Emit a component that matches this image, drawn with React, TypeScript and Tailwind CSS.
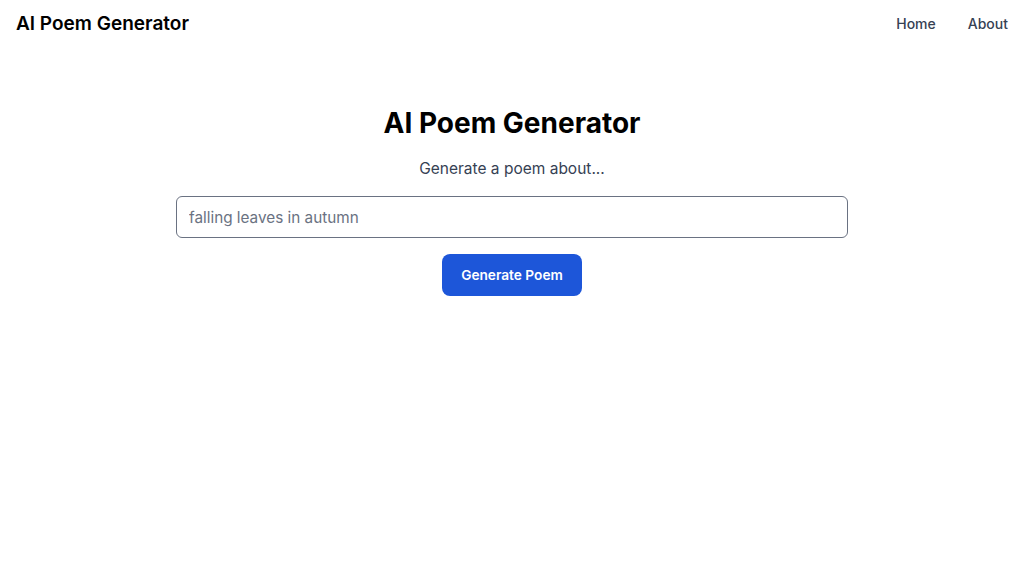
export default function App() {
    return (
        <div className="min-h-screen bg-white text-black" style={{ fontFamily: 'Inter, "Liberation Sans", sans-serif' }}>
            <header className="flex items-center justify-between px-4 h-12">
                <div className="text-[19px] font-semibold leading-7">AI Poem Generator</div>
                <nav className="flex items-center gap-8 text-sm font-medium text-gray-700">
                    <a href="#">Home</a>
                    <a href="#">About</a>
                </nav>
            </header>
            <main className="flex flex-col items-center pt-[57px]">
                <h1 className="text-[28px] font-bold leading-9">AI Poem Generator</h1>
                <p className="mt-4 text-[15.5px] leading-6 text-gray-700">Generate a poem about...</p>
                <input
                    type="text"
                    placeholder="falling leaves in autumn"
                    className="mt-[15px] w-[672px] h-[42px] px-3 border border-gray-500 rounded-md text-[15.3px] placeholder:text-gray-500 outline-none"
                />
                <button className="mt-4 w-[140px] h-[42px] rounded-lg bg-[#1d56d9] text-white text-[13.7px] font-semibold">
                    Generate Poem
                </button>
            </main>
        </div>
    );
}
